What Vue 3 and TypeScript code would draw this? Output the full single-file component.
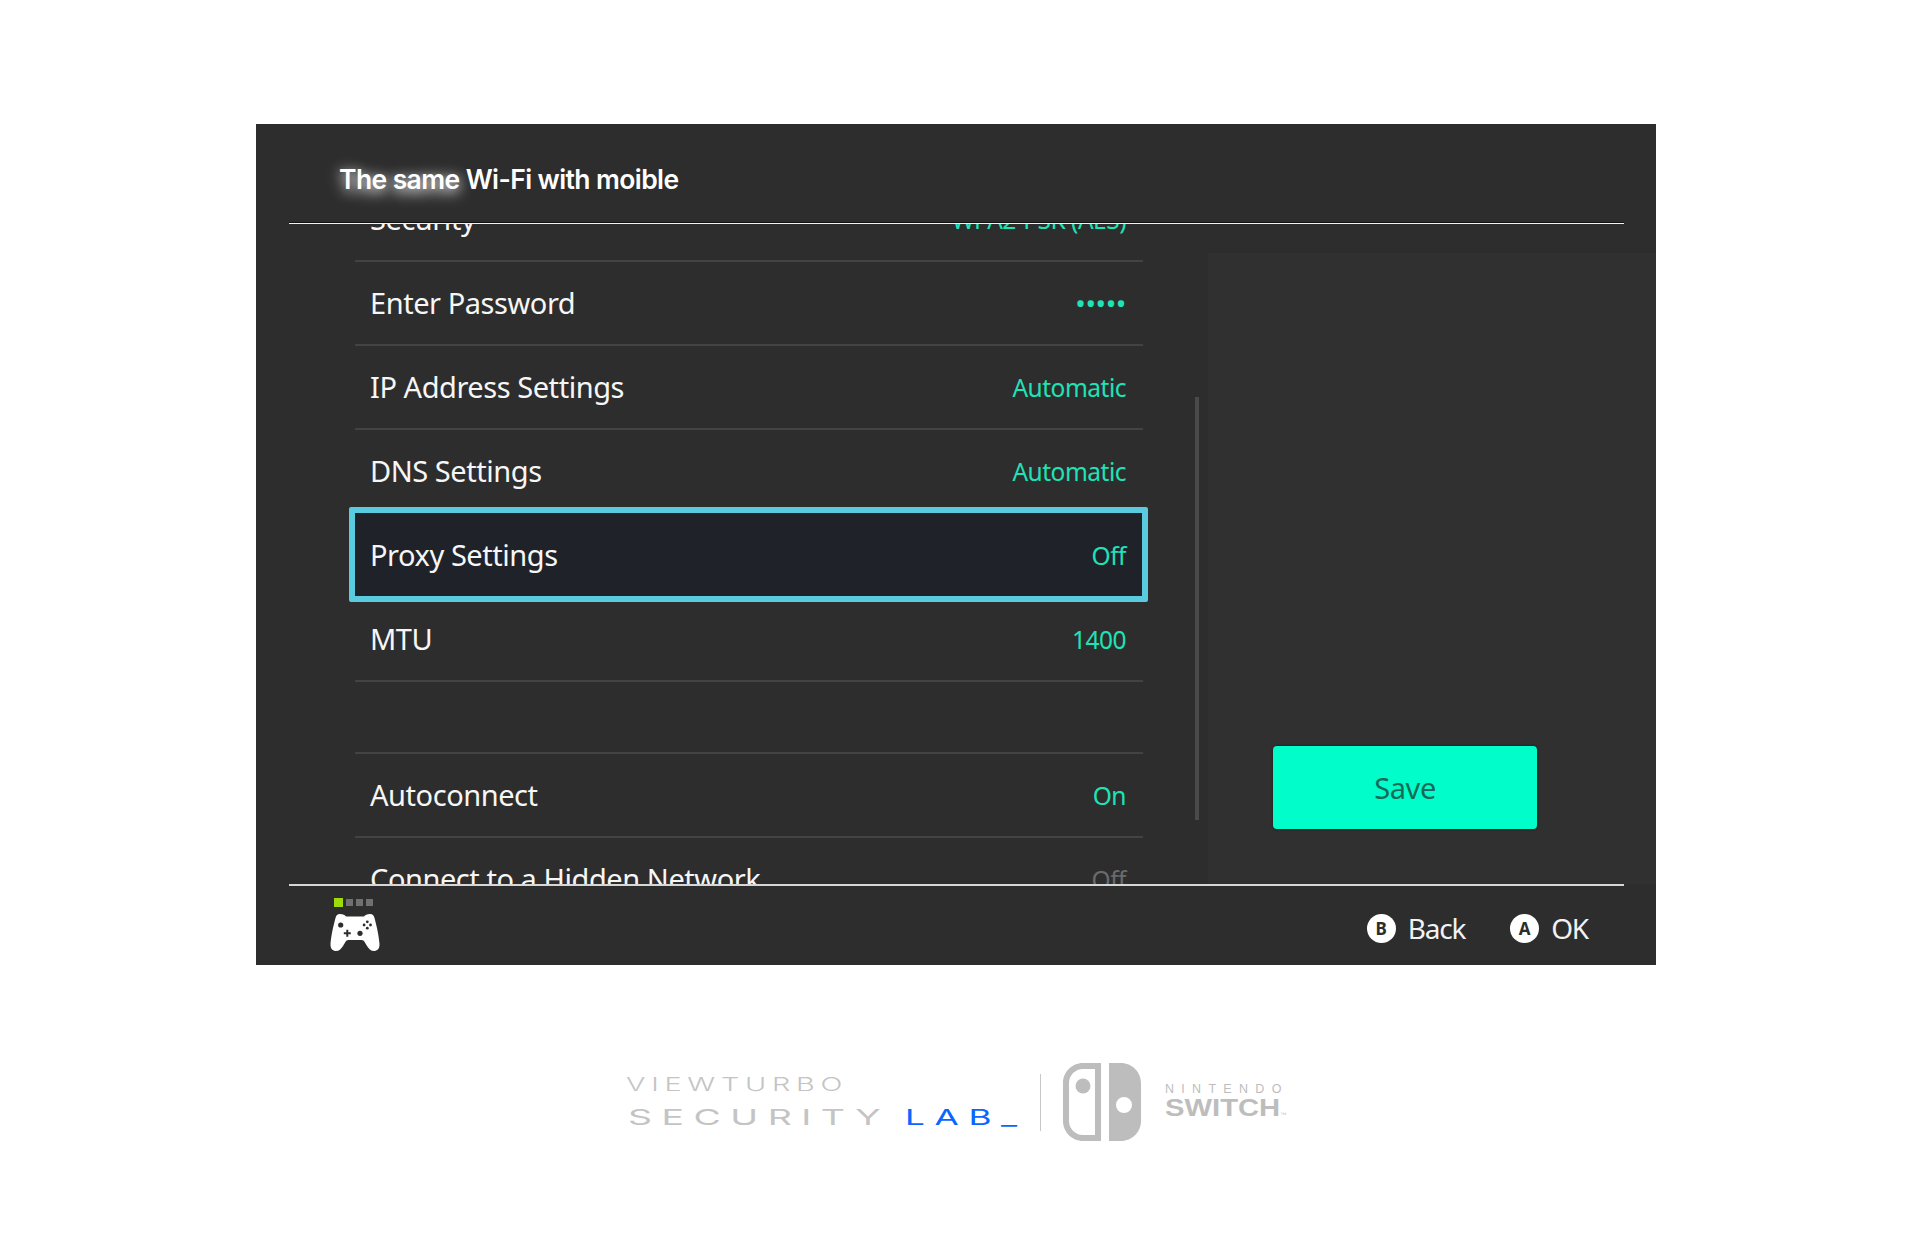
<script setup lang="ts">
interface Row {
  label: string;
  value: string;
  selected?: boolean;
  dim?: boolean;
  gapAfter?: boolean;
  secret?: boolean;
}

const rows: Row[] = [
  { label: 'Security', value: 'WPA2-PSK (AES)' },
  { label: 'Enter Password', value: '•••••', secret: true },
  { label: 'IP Address Settings', value: 'Automatic' },
  { label: 'DNS Settings', value: 'Automatic' },
  { label: 'Proxy Settings', value: 'Off', selected: true },
  { label: 'MTU', value: '1400', gapAfter: true },
  { label: 'Autoconnect', value: 'On' },
  { label: 'Connect to a Hidden Network', value: 'Off', dim: true },
];
</script>

<template>
  <div class="page">
    <section class="panel">
      <header class="head">
        <h1><span class="smudge">The same</span> Wi-Fi with moible</h1>
      </header>

      <div class="body">
        <div class="list-wrap">
          <ul class="list">
            <li
              v-for="r in rows"
              :key="r.label"
              class="row"
              :class="{ selected: r.selected, gap: r.gapAfter }"
            >
              <span class="label">{{ r.label }}</span>
              <span class="value" :class="{ dim: r.dim, secret: r.secret }">{{ r.value }}</span>
            </li>
          </ul>
        </div>
        <div class="scroll-col"><div class="thumb"></div></div>
        <aside class="side">
          <button class="save">Save</button>
        </aside>
      </div>

      <footer class="foot">
        <div class="pad">
          <div class="leds"><i class="on"></i><i></i><i></i><i></i></div>
          <svg width="50" height="38" viewBox="0 0 50 38">
            <path fill="#fff" d="M10 1C7 1 6 3 5.5 5C3 14 1 24 .5 31C.3 36 3 38 6 38C9 38 11 36 13 33L16 28C17 27 18 27 19 27H31C32 27 33 27 34 28L37 33C39 36 41 38 44 38C47 38 49.7 36 49.5 31C49 24 47 14 44.5 5C44 3 43 1 40 1C37 1 35 2 34 3.5H16C15 2 13 1 10 1Z" />
            <circle cx="10.7" cy="12" r="2.6" fill="#2d2d2d" />
            <circle cx="30" cy="20.3" r="2.6" fill="#2d2d2d" />
            <path fill="#2d2d2d" d="M16.3 16.8h2v2.5h2.5v2h-2.5v2.5h-2v-2.5h-2.5v-2h2.5z" />
            <circle cx="37.3" cy="8.8" r="1.4" fill="#2d2d2d" />
            <circle cx="37.3" cy="15.2" r="1.4" fill="#2d2d2d" />
            <circle cx="34.1" cy="12" r="1.4" fill="#2d2d2d" />
            <circle cx="40.5" cy="12" r="1.4" fill="#2d2d2d" />
          </svg>
        </div>
        <div class="hints">
          <span class="hint"><b class="key">B</b>Back</span>
          <span class="hint"><b class="key">A</b>OK</span>
        </div>
      </footer>
    </section>

    <div class="brand">
      <div class="vt">
        <div class="vt-top">VIEWTURBO</div>
        <div class="vt-bottom"><span class="sec">SECURITY</span><span class="lab">LAB_</span></div>
      </div>
      <div class="sep"></div>
      <svg class="joycons" width="78" height="78" viewBox="0 0 78 78">
        <path fill="#bdbdbd" fill-rule="evenodd" d="M38 0V78H20C9 78 0 69 0 58V20C0 9 9 0 20 0ZM32 6H20C12.300 6 6 12.300 6 20V58C6 65.700 12.300 72 20 72H32Z" />
        <circle cx="20" cy="23" r="7.500" fill="#bdbdbd" />
        <path fill="#bdbdbd" fill-rule="evenodd" d="M46 0H58C69 0 78 9 78 20V58C78 69 69 78 58 78H46ZM61 34A8 8 0 1 0 61 50A8 8 0 1 0 61 34Z" />
      </svg>
      <div class="ns">
        <div class="ns-top">NINTENDO</div>
        <div class="ns-bottom">SWITCH<small>™</small></div>
      </div>
    </div>
  </div>
</template>

<style>
html, body { margin: 0; background: #fff; }
</style>

<style scoped>
.page { width: 1912px; height: 1237px; padding-top: 124px; box-sizing: border-box; overflow: hidden; }

.panel { width: 1400px; height: 841px; margin: 0 auto; background: #2d2d2d; color: #fff; font-family: "Noto Sans", sans-serif; display: flex; flex-direction: column; }

.head { height: 99px; margin: 0 32px 0 33px; padding-left: 50px; display: flex; align-items: center; position: relative; z-index: 2; }
.head::after { content: ""; position: absolute; left: 0; right: 0; bottom: -1px; height: 2px; background: #f2f2f2; border-top: 1px solid #111; box-sizing: border-box; }
h1 { margin: 10px 0 0; font: 600 26.500px "Inter", sans-serif; letter-spacing: -0.6px; white-space: nowrap; }
.smudge { text-shadow: 0 3px 12px rgba(255, 255, 255, .8), 0 4px 18px rgba(255, 255, 255, .6); }

.body { flex: 1; display: flex; min-height: 0; }
.list-wrap { width: 788px; margin-left: 99px; clip-path: inset(0 -10px 0 -10px); }
.list { list-style: none; margin: -45px 0 0; padding: 0; }

.row { height: 84px; box-sizing: border-box; padding: 0 17px 2px 15px; border-bottom: 2px solid #434343; display: flex; align-items: center; justify-content: space-between; position: relative; }
.row.gap { margin-bottom: 72px; }
.row.gap::after { content: ""; position: absolute; left: 0; right: 0; bottom: -74px; height: 2px; background: #434343; }
.row.selected { border-bottom-color: transparent; z-index: 1; }
.row.selected::before { content: ""; position: absolute; inset: -7px -5px -6px -6px; z-index: -1; background: #1f2329; border: 6px solid #5acbdf; border-radius: 2px; box-sizing: border-box; }

.label { font-size: 29px; letter-spacing: -0.45px; color: #f6f6f6; white-space: nowrap; }
.value { font-size: 24.500px; letter-spacing: -0.5px; color: #1fe3b8; white-space: nowrap; padding-top: 2px; }
.value.dim { color: #6a6a6a; }
.value.secret { font-size: 28px; letter-spacing: -0.4px; }

.scroll-col { width: 65px; position: relative; }
.thumb { position: absolute; left: 52px; top: 174px; width: 4px; height: 423px; background: #4a4a4a; }

.side { flex: 1; background: #303030; margin-top: 30px; padding-left: 65px; }
.save { display: block; width: 264px; height: 83px; margin-top: 493px; border: 0; border-radius: 4px; background: #00fdca; color: #176a58; font: 29px "Noto Sans", sans-serif; letter-spacing: -0.4px; box-shadow: 0 0 3px #1c1c1c; padding: 0; }

.foot { height: 81px; margin: 0 32px 0 33px; border-top: 2px solid #d6d6d6; box-sizing: border-box; display: flex; justify-content: space-between; padding: 11px 36px 0 41px; }
.pad { display: flex; flex-direction: column; gap: 6px; }
.leds { display: flex; gap: 3px; align-items: center; height: 10px; padding-left: 4px; }
.leds i { width: 7px; height: 7px; background: #707070; }
.leds i.on { width: 9px; height: 9px; background: #9edb0b; }

.hints { display: flex; gap: 45px; padding-top: 12px; align-items: flex-start; }
.hint { display: flex; align-items: center; gap: 12px; font-size: 28px; letter-spacing: -1.2px; line-height: 38px; color: #f2f2f2; }
.key { width: 29px; height: 29px; border-radius: 50%; background: #fff; color: #2d2d2d; font: 700 17px "Noto Sans", sans-serif; letter-spacing: 0; display: flex; align-items: center; justify-content: center; }

.brand { display: flex; align-items: center; margin: 98px 0 0 626px; height: 78px; }
.vt { flex: none; width: 414px; color: #c4c4c4; font-family: "Inter", sans-serif; font-weight: 300; white-space: nowrap; }
.vt-top { font-size: 18px; line-height: 18px; letter-spacing: 3.600px; transform: scaleX(1.6); transform-origin: left; }
.vt-bottom { display: flex; margin-top: 12px; padding-left: 2px; font-size: 22px; line-height: 22px; font-weight: 400; }
.sec { display: block; width: 277px; letter-spacing: 5.600px; transform: scaleX(1.7); transform-origin: left; }
.lab { display: block; color: #0a66ff; letter-spacing: 6px; transform: scaleX(1.6); transform-origin: left; }
.sep { flex: none; width: 1px; height: 57px; background: #c8c8c8; }
.joycons { margin-left: 22px; flex: none; }
.ns { flex: none; margin-left: 24px; padding-top: 4px; color: #bdbdbd; font-family: "Liberation Sans", sans-serif; white-space: nowrap; }
.ns-top { font-size: 12.500px; line-height: 13px; letter-spacing: 7.300px; }
.ns-bottom { font-size: 23px; font-weight: 700; line-height: 24px; transform: scaleX(1.27); transform-origin: left; }
.ns-bottom small { font-size: 5px; font-weight: 400; vertical-align: baseline; }
</style>
